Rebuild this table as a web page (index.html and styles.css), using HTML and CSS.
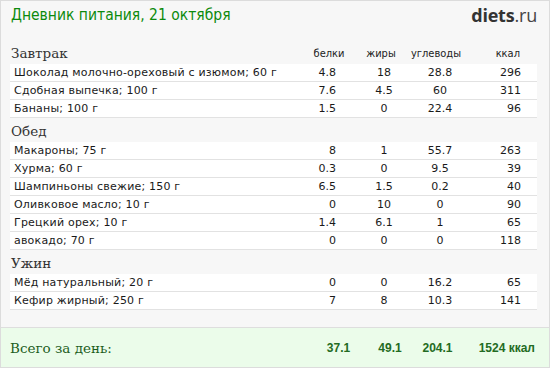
FILE: index.html
```html
<!DOCTYPE html>
<html lang="ru">
<head>
<meta charset="utf-8">
<title>Дневник питания</title>
<link rel="stylesheet" href="styles.css">
</head>
<body>
<div class="page">
  <div class="content">
    <header class="top">
      <h1 class="title">Дневник питания, 21 октября</h1>
      <div class="logo"><span class="logo-main">diets</span><span class="logo-tld">.ru</span></div>
    </header>

    <section class="meal">
      <div class="meal-head">
        <h2 class="meal-name">Завтрак</h2>
        <span class="hc hc1">белки</span>
        <span class="hc hc2">жиры</span>
        <span class="hc hc3">углеводы</span>
        <span class="hc hc4">ккал</span>
      </div>
      <div class="row"><span class="name">Шоколад молочно-ореховый с изюмом; 60 г</span><span class="c1">4.8</span><span class="c2">18</span><span class="c3">28.8</span><span class="c4">296</span></div>
      <div class="row"><span class="name">Сдобная выпечка; 100 г</span><span class="c1">7.6</span><span class="c2">4.5</span><span class="c3">60</span><span class="c4">311</span></div>
      <div class="row"><span class="name">Бананы; 100 г</span><span class="c1">1.5</span><span class="c2">0</span><span class="c3">22.4</span><span class="c4">96</span></div>
    </section>

    <section class="meal">
      <div class="meal-head">
        <h2 class="meal-name">Обед</h2>
      </div>
      <div class="row"><span class="name">Макароны; 75 г</span><span class="c1">8</span><span class="c2">1</span><span class="c3">55.7</span><span class="c4">263</span></div>
      <div class="row"><span class="name">Хурма; 60 г</span><span class="c1">0.3</span><span class="c2">0</span><span class="c3">9.5</span><span class="c4">39</span></div>
      <div class="row"><span class="name">Шампиньоны свежие; 150 г</span><span class="c1">6.5</span><span class="c2">1.5</span><span class="c3">0.2</span><span class="c4">40</span></div>
      <div class="row"><span class="name">Оливковое масло; 10 г</span><span class="c1">0</span><span class="c2">10</span><span class="c3">0</span><span class="c4">90</span></div>
      <div class="row"><span class="name">Грецкий орех; 10 г</span><span class="c1">1.4</span><span class="c2">6.1</span><span class="c3">1</span><span class="c4">65</span></div>
      <div class="row"><span class="name">авокадо; 70 г</span><span class="c1">0</span><span class="c2">0</span><span class="c3">0</span><span class="c4">118</span></div>
    </section>

    <section class="meal">
      <div class="meal-head">
        <h2 class="meal-name">Ужин</h2>
      </div>
      <div class="row"><span class="name">Мёд натуральный; 20 г</span><span class="c1">0</span><span class="c2">0</span><span class="c3">16.2</span><span class="c4">65</span></div>
      <div class="row"><span class="name">Кефир жирный; 250 г</span><span class="c1">7</span><span class="c2">8</span><span class="c3">10.3</span><span class="c4">141</span></div>
    </section>
  </div>

  <footer class="total">
    <span class="total-label">Всего за день:</span>
    <span class="t1">37.1</span>
    <span class="t2">49.1</span>
    <span class="t3">204.1</span>
    <span class="t4">1524 ккал</span>
  </footer>
</div>
</body>
</html>
```

FILE: styles.css
```css
* { box-sizing: border-box; }

html, body {
  margin: 0;
  padding: 0;
  background: #ffffff;
}

.page {
  width: 550px;
  height: 368px;
  border: 1px solid #dcdcdc;
  background: #f7f7f7;
  display: flex;
  flex-direction: column;
  overflow: hidden;
}

.content {
  padding: 0 12px 0 9px;
}

.top {
  display: flex;
  justify-content: space-between;
  align-items: center;
  padding-top: 4px;
  height: 24px;
}

.title {
  margin: 0;
  font-family: "DejaVu Sans Condensed", "DejaVu Sans", sans-serif;
  font-weight: normal;
  font-size: 15.5px;
  line-height: 20px;
  color: #0c8a0c;
  padding-left: 1px;
}

.logo {
  font-family: "Open Sans", "DejaVu Sans", sans-serif;
  font-size: 18px;
  line-height: 20px;
  color: #333;
  letter-spacing: -0.2px;
}

.logo-main {
  font-weight: 700;
  color: #333;
}

.logo-tld {
  font-weight: 400;
  color: #444;
}

.meal:first-of-type {
  margin-top: 15px;
}

.meal-head {
  display: grid;
  grid-template-columns: 292px 54px 50px 60px 71px;
  align-items: end;
  height: 24px;
  padding: 5px 0 2px;
}

.meal-name {
  margin: 0;
  font-family: "DejaVu Serif", serif;
  font-weight: normal;
  font-size: 13.5px;
  line-height: 17px;
  color: #333;
  padding-left: 1px;
}

.hc {
  font-family: "DejaVu Sans Condensed", "DejaVu Sans", sans-serif;
  font-size: 11px;
  line-height: 17px;
  color: #222;
  text-align: center;
}

.hc4 {
  text-align: right;
  padding-right: 17px;
}

.row {
  display: grid;
  grid-template-columns: 290px 56px 56px 56px 69px;
  align-items: center;
  height: 18px;
  background: #ffffff;
  border-bottom: 1px solid #e2e2e2;
  font-family: "DejaVu Sans", sans-serif;
  font-size: 11px;
  line-height: 17px;
  color: #1a1a1a;
}

.name {
  padding-left: 4px;
  white-space: nowrap;
  letter-spacing: 0.2px;
}

.c1 {
  text-align: right;
  padding-right: 20px;
}

.c2, .c3 {
  text-align: center;
}

.c4 {
  text-align: right;
  padding-right: 16px;
}

.total {
  margin-top: auto;
  height: 40px;
  border-top: 1px solid #dedede;
  background: #ebfcea;
  display: grid;
  grid-template-columns: 311px 53px 50px 45px 89px;
  align-items: center;
  color: #236b23;
}

.total-label {
  padding-left: 9px;
  font-family: "DejaVu Serif", serif;
  font-size: 13.5px;
  color: #1d5e1d;
}

.t1, .t2, .t3, .t4 {
  font-family: "Liberation Sans", Arial, sans-serif;
  font-weight: bold;
  font-size: 12px;
  text-align: center;
  white-space: nowrap;
}

.t4 {
  text-align: right;
  padding-right: 14px;
}
```
